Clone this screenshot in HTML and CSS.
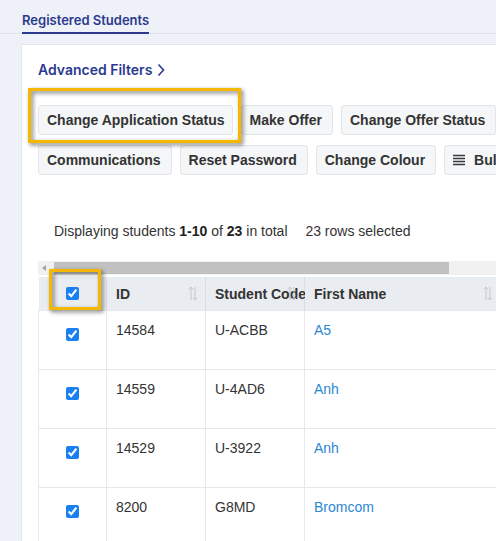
FILE: index.html
```html
<!DOCTYPE html>
<html lang="en">
<head>
    <meta charset="UTF-8">
    <meta name="viewport" content="width=device-width, initial-scale=1.0">
    <title>Registered Students</title>
    <link rel="stylesheet" href="styles.css">
</head>
<body>
    <nav class="tabs">
        <a href="#" class="tab active">Registered Students</a>
    </nav>

    <div class="card">
        <a href="#" class="filters">Advanced Filters
            <svg width="8" height="14" viewBox="0 0 8 14"><path d="M1.5 1.5 L6.5 7 L1.5 12.5" fill="none" stroke="currentColor" stroke-width="1.6"/></svg>
        </a>

        <!-- Bulk actions -->
        <div class="actions">
            <div class="action-row">
                <span class="highlight hl-button"><button class="btn">Change Application Status</button></span>
                <button class="btn">Make Offer</button>
                <button class="btn">Change Offer Status</button>
            </div>
            <div class="action-row">
                <button class="btn">Communications</button>
                <button class="btn">Reset Password</button>
                <button class="btn">Change Colour</button>
                <button class="btn btn-icon">
                    <svg width="12" height="12" viewBox="0 0 12 12"><path d="M0 1.5h12M0 4.5h12M0 7.5h12M0 10.5h12" stroke="#3a3a3a" stroke-width="1.6"/></svg>
                    Bulk Actions
                </button>
            </div>
        </div>

        <p class="summary">Displaying students <b>1-10</b> of <b>23</b> in total <span class="selected">23 rows selected</span></p>

        <div class="hscroll">
            <span class="hscroll-arrow"></span>
            <span class="hscroll-thumb"></span>
        </div>

        <table class="students">
            <colgroup>
                <col style="width: 68px">
                <col style="width: 99px">
                <col style="width: 99px">
                <col style="width: 196px">
                <col style="width: 150px">
            </colgroup>
            <thead>
                <tr>
                    <th class="col-check"><div class="check-head highlight hl-check"><input type="checkbox" checked></div></th>
                    <th>ID <span class="sort"></span></th>
                    <th>Student Code <span class="sort"></span></th>
                    <th>First Name <span class="sort"></span></th>
                    <th>Last Name <span class="sort"></span></th>
                </tr>
            </thead>
            <tbody id="studentRows"></tbody>
        </table>
    </div>

    <script>
        const students = [
            { id: 14584, code: "U-ACBB", first: "A5", last: "Test" },
            { id: 14559, code: "U-4AD6", first: "Anh", last: "Nguyen" },
            { id: 14529, code: "U-3922", first: "Anh", last: "Tran" },
            { id: 8200, code: "G8MD", first: "Bromcom", last: "Student" },
            { id: 8199, code: "G8MC", first: "Charlie", last: "Brown" }
        ];

        const sortIcon = '<svg width="10" height="15" viewBox="0 0 10 15"><path d="M3 14V1M0.8 3.4L3 1L5.2 3.4M7 1V14M4.8 11.6L7 14L9.2 11.6" fill="none" stroke="#c3c7cc" stroke-width="1"/></svg>';
        document.querySelectorAll(".sort").forEach(s => s.innerHTML = sortIcon);

        const tbody = document.getElementById("studentRows");
        students.forEach(s => {
            const tr = document.createElement("tr");
            tr.innerHTML = `
                <td class="col-check"><input type="checkbox" checked></td>
                <td>${s.id}</td>
                <td>${s.code}</td>
                <td><a href="#">${s.first}</a></td>
                <td>${s.last}</td>`;
            tbody.appendChild(tr);
        });
    </script>
</body>
</html>
```

FILE: styles.css
```css
body {
    margin: 0;
    background-color: #eef1f7;
    font-family: "Liberation Sans", Arial, sans-serif;
    color: #333;
    width: 496px;
    height: 541px;
    overflow: hidden;
}

.tabs {
    display: flex;
    padding: 10px 0 0 22px;
    border-bottom: 1px solid #dfe3eb;
}

.tab {
    font-family: Inter, "Liberation Sans", sans-serif;
    font-weight: 600;
    font-size: 13px;
    line-height: 20px;
    color: #2b3a8f;
    text-decoration: none;
    padding-bottom: 2px;
    border-bottom: 2px solid #2b3a8f;
    margin-bottom: -1px;
}

.card {
    margin: 10px 0 0 21px;
    width: 700px;
    min-height: 600px;
    background: #fff;
    border: 1px solid #e1e5ed;
    padding: 15px 16px 0;
}

.filters {
    display: inline-flex;
    align-items: center;
    gap: 5px;
    font-family: Inter, "Liberation Sans", sans-serif;
    font-weight: 600;
    font-size: 14px;
    line-height: 20px;
    color: #2b3a8f;
    text-decoration: none;
}

.actions {
    display: flex;
    flex-direction: column;
    gap: 10px;
    margin-top: 25px;
}

.action-row {
    display: flex;
    gap: 8px;
}

.btn {
    font-family: "Liberation Sans", Arial, sans-serif;
    font-weight: bold;
    font-size: 14px;
    line-height: 16px;
    color: #333;
    background: #f5f6f8;
    border: 1px solid #e3e5e9;
    border-radius: 3px;
    padding: 6px 10px 6px 8px;
    white-space: nowrap;
    cursor: pointer;
}

.btn-icon {
    display: inline-flex;
    align-items: center;
    gap: 9px;
}

/* yellow annotation boxes */
.highlight {
    position: relative;
}

.highlight::after {
    content: "";
    position: absolute;
    border: 3px solid #f6b700;
    filter: drop-shadow(2px 2px 2px rgba(0, 0, 0, 0.55));
    pointer-events: none;
}

.hl-button {
    display: inline-flex;
}

.hl-button .btn {
    padding-right: 7px;
}

.hl-button::after {
    top: -17px;
    left: -10px;
    right: -8px;
    bottom: -8px;
}

.check-head {
    height: 33px;
    display: flex;
    align-items: center;
    justify-content: center;
}

.hl-check::after {
    top: -8px;
    left: 10px;
    right: 5px;
    bottom: 0;
}

.summary {
    margin: 46px 0 0;
    padding-left: 16px;
    font-size: 14px;
    line-height: 20px;
}

.summary b {
    color: #222;
}

.selected {
    margin-left: 14px;
}

.hscroll {
    display: flex;
    align-items: center;
    height: 14px;
    margin-top: 20px;
    background: #f1f1f1;
}

.hscroll-arrow {
    width: 16px;
    height: 14px;
    position: relative;
}

.hscroll-arrow::before {
    content: "";
    position: absolute;
    left: 4px;
    top: 4px;
    border-top: 3px solid transparent;
    border-bottom: 3px solid transparent;
    border-right: 4px solid #a3a3a3;
}

.hscroll-thumb {
    width: 395px;
    height: 12px;
    background: #c1c1c1;
}

.students {
    border-collapse: collapse;
    table-layout: fixed;
    width: 612px;
    margin-top: 2px;
    font-size: 14px;
}

.students th {
    position: relative;
    height: 33px;
    padding: 0 10px 0 9px;
    text-align: left;
    white-space: nowrap;
    background: #e9ecf0;
    border-right: 1px solid #dadee3;
    color: #333;
}

.students th .sort {
    position: absolute;
    right: 7px;
    top: 9px;
    line-height: 0;
}

.students td {
    height: 38px;
    padding: 9px 10px 11px 9px;
    line-height: 20px;
    vertical-align: top;
    border: 1px solid #e6e8eb;
}

.students .col-check {
    text-align: center;
    padding: 0;
}

.students td.col-check {
    padding-top: 12px;
}

.students input {
    accent-color: #1a7ff0;
    margin: 0;
    width: 13px;
    height: 13px;
    vertical-align: middle;
}

.students a {
    color: #2b87d3;
    text-decoration: none;
}
```
